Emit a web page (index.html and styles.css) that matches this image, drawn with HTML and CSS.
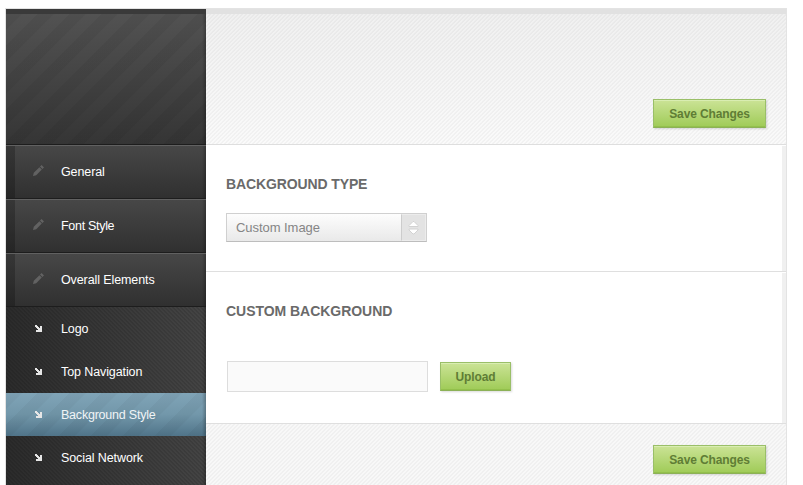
FILE: index.html
```html
<!DOCTYPE html>
<html lang="en">
<head>
<meta charset="utf-8">
<title>Theme Options</title>
<link rel="stylesheet" href="styles.css">
</head>
<body>
<svg width="0" height="0" class="defs">
  <symbol id="pencil" viewBox="0 0 11 11"><path d="M0 11 L.8 7.8 L6.4 2.2 L8.8 4.6 L3.2 10.2 Z M7 1.6 L8.6 0 L11 2.4 L9.4 4 Z"/></symbol>
  <symbol id="arrow" viewBox="0 0 7 7"><path d="M0 0H2V1H3V2H4V3H5V1H7V7H1V5H3V4H2V3H1V2H0Z"/></symbol>
</svg>
<div class="panel">
  <aside class="sidebar">
    <div class="brand"></div>
    <nav>
      <a class="item"><svg class="pencil"><use href="#pencil"/></svg><span>General</span></a>
      <a class="item"><svg class="pencil"><use href="#pencil"/></svg><span class="tight">Font Style</span></a>
      <a class="item"><svg class="pencil"><use href="#pencil"/></svg><span>Overall Elements</span></a>
      <div class="submenu">
        <a class="sub"><svg class="arrow"><use href="#arrow"/></svg><span>Logo</span></a>
        <a class="sub"><svg class="arrow"><use href="#arrow"/></svg><span>Top Navigation</span></a>
        <a class="sub active"><svg class="arrow"><use href="#arrow"/></svg><span>Background Style</span></a>
        <a class="sub"><svg class="arrow"><use href="#arrow"/></svg><span>Social Network</span></a>
      </div>
    </nav>
  </aside>
  <main class="content">
    <header class="bar top"><button class="btn save">Save Changes</button></header>
    <section class="type">
      <h2 class="narrow">BACKGROUND TYPE</h2>
      <div class="select"><span class="value">Custom Image</span><span class="knob"><svg width="11" height="15" viewBox="0 0 11 15"><path d="M1 6.5V5.5L5 1.5H6L10 5.5V6.5ZM1 9V10L5 14H6L10 10V9Z"/></svg></span></div>
    </section>
    <section class="custom">
      <h2>CUSTOM BACKGROUND</h2>
      <div class="row"><input class="field" type="text" aria-label="Custom background"><button class="btn upload">Upload</button></div>
    </section>
    <footer class="bar bottom"><button class="btn save">Save Changes</button></footer>
  </main>
</div>
</body>
</html>
```
FILE: styles.css
```css
* { box-sizing: border-box; }
body { margin: 0; background: #fff; font-family: "Liberation Sans", Arial, sans-serif; overflow: hidden; }
.defs { display: block; }
.panel { display: flex; width: 782px; height: 477px; margin: 8px 0 0 5px; border: 1px solid #e3e3e3; border-bottom: 0; overflow: hidden; }
.sidebar { display: flex; flex-direction: column; width: 200px; flex: none; }
nav { display: flex; flex-direction: column; flex: 1; }
.brand {
  flex: none; height: 136px; border-top: 5px solid #3a3a3a; border-bottom: 1px solid #1d1d1d;
  background:
    linear-gradient(270deg, rgba(0,0,0,.25), transparent 4px),
    repeating-linear-gradient(135deg, rgba(0,0,0,.05) 0 10.8px, transparent 11.8px 22.1px, rgba(0,0,0,.05) 22.6px),
    linear-gradient(#525252, #353535);
}
.item {
  display: flex; align-items: flex-start; height: 54px; padding: 18px 0 0 27px;
  border-top: 1px solid #616161; border-bottom: 1px solid #1d1d1d;
  background:
    linear-gradient(90deg, rgba(0,0,0,.23) 9px, transparent 9px),
    linear-gradient(270deg, rgba(0,0,0,.25), transparent 4px),
    linear-gradient(#474747, #303030);
}
.item, .sub { color: #fff; font-size: 12.5px; letter-spacing: -.1px; }
.item span { line-height: 16px; }
.item .tight { letter-spacing: -.3px; }
.pencil { width: 11px; height: 11px; fill: #626262; margin: 1px 17px 0 0; }
.submenu {
  flex: 1;
  background:
    linear-gradient(270deg, rgba(0,0,0,.25), transparent 4px),
    repeating-linear-gradient(45deg, rgba(0,0,0,.1) 0 1.414px, transparent 1.414px 2.828px),
    linear-gradient(90deg, #2b2b2b, #444);
}
.sub { display: flex; align-items: center; height: 43px; padding-left: 29px; }
.arrow { width: 7px; height: 7px; fill: #e6e6e6; margin-right: 19px; }
.sub.active {
  color: #f0f4f6; letter-spacing: -.22px;
  background:
    linear-gradient(270deg, rgba(0,0,0,.25), transparent 4px),
    repeating-linear-gradient(135deg, rgba(0,0,0,.035) 0 10.8px, transparent 11.8px 22.1px, rgba(0,0,0,.035) 22.6px),
    linear-gradient(#80a4b7, #7297aa 50%, #507489);
}
.content { width: 580px; flex: none; }
.bar { display: flex; justify-content: flex-end; align-items: flex-start; padding-right: 20px; }
.top {
  height: 136px; padding-top: 85px; border-top: 5px solid #e1e1e1; border-bottom: 1px solid #dedede;
  background:
    repeating-linear-gradient(135deg, rgba(0,0,0,.03) 0 1.414px, transparent 1.414px 2.828px),
    linear-gradient(#f0f0f0, #fafafa);
}
.bottom {
  height: 61px; padding-top: 21px;
  background:
    repeating-linear-gradient(135deg, rgba(0,0,0,.03) 0 1.414px, transparent 1.414px 2.828px),
    #f8f8f8;
}
section { padding-left: 20px; border-bottom: 1px solid #dfdfdf; background: linear-gradient(#f0f0f0, #f0f0f0) right 0 top 1px / 4px 100% no-repeat #fff; }
.type { height: 127px; padding-top: 31px; }
.custom { height: 152px; padding-top: 31px; }
h2 { margin: 0; font-size: 14px; line-height: 16px; color: #6a6a6a; letter-spacing: -.04px; }
.narrow { letter-spacing: -.12px; }
.select { display: flex; width: 201px; height: 29px; margin-top: 21px; border: 1px solid #d0d0d0; border-bottom-color: #bdbdbd; background: linear-gradient(#fdfdfd, #e9e9e9); }
.value { flex: 1; padding-left: 9px; line-height: 28px; font-size: 13px; letter-spacing: -.05px; color: #858585; }
.knob { display: flex; width: 25px; align-items: center; justify-content: center; border: 1px solid #ececec; border-left-color: #ccc; background: #e3e3e3; }
.knob svg { flex: none; fill: #fff; stroke: #d2d2d2; stroke-width: 1; }
.row { display: flex; align-items: flex-start; gap: 12px; padding: 42px 0 0 1px; }
.field { width: 201px; height: 31px; margin: 0; border: 1px solid #ddd; background: #fafafa; }
.btn {
  height: 29px; padding: 0; border: 1px solid #9abf68; border-bottom-color: #8cb157;
  background: linear-gradient(#cbe396, #9fcb57);
  box-shadow: inset 0 1px #d9edb2, inset 0 -1px #93c04c, 1px 1px 2px rgba(0,0,0,.15);
  font: bold 12px "Liberation Sans", Arial, sans-serif; letter-spacing: -.13px; color: #5f7d35;
}
.save { width: 113px; }
.upload { width: 71px; margin-top: 1px; }
```
